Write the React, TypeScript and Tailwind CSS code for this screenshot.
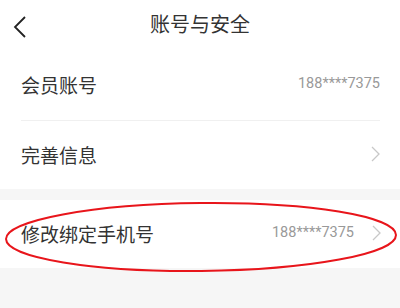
import React from "react";

const Chevron = () => (
  <svg width="9" height="16" viewBox="0 0 9 16" className="shrink-0">
    <polyline points="1,1 8,8 1,15" fill="none" stroke="#c8c8c8" strokeWidth="1.3" />
  </svg>
);

export default function App() {
  const font = { fontFamily: '"Noto Sans CJK SC", "Noto Sans", sans-serif' };
  const num = { fontFamily: "Roboto, sans-serif" };
  return (
    <div className="relative w-[400px] h-[308px] bg-[#f6f6f6] overflow-hidden" style={font}>
      <div className="bg-white">
        <div className="relative h-[52px] flex items-center justify-center pb-[4px]">
          <svg width="14" height="22" viewBox="0 0 14 22" className="absolute left-[13px] top-[16px]">
            <polyline points="12,1 2,11 12,21" fill="none" stroke="#222" strokeWidth="1.8" />
          </svg>
          <span className="text-[20px] text-[#333] leading-none">账号与安全</span>
        </div>
        <div className="h-[68px] flex items-center justify-between pl-[21px] pr-[20px] pb-[3px]">
          <span className="text-[19px] text-[#333] leading-none">会员账号</span>
          <span className="text-[14.5px] text-[#999] leading-none" style={num}>188****7375</span>
        </div>
        <div className="ml-[21px] mr-[20px] h-px bg-[#f0f0f0]" />
        <div className="h-[68px] flex items-center justify-between pl-[21px] pr-[20px] pb-[2px]">
          <span className="text-[19px] text-[#333] leading-none">完善信息</span>
          <Chevron />
        </div>
      </div>
      <div className="h-[11px]" />
      <div className="bg-white h-[68px] flex items-center justify-between pl-[21px] pr-[19px] pb-[2px]">
        <span className="text-[19px] text-[#333] leading-none">修改绑定手机号</span>
        <div className="flex items-center gap-[18px]">
          <span className="text-[14.5px] text-[#999] leading-none" style={num}>188****7375</span>
          <Chevron />
        </div>
      </div>
      <svg className="absolute left-0 top-0 pointer-events-none" width="400" height="308">
        <ellipse cx="201" cy="237" rx="195" ry="34" fill="none" stroke="#e8151b" strokeWidth="2" transform="rotate(-0.6 201 237)" />
      </svg>
    </div>
  );
}
